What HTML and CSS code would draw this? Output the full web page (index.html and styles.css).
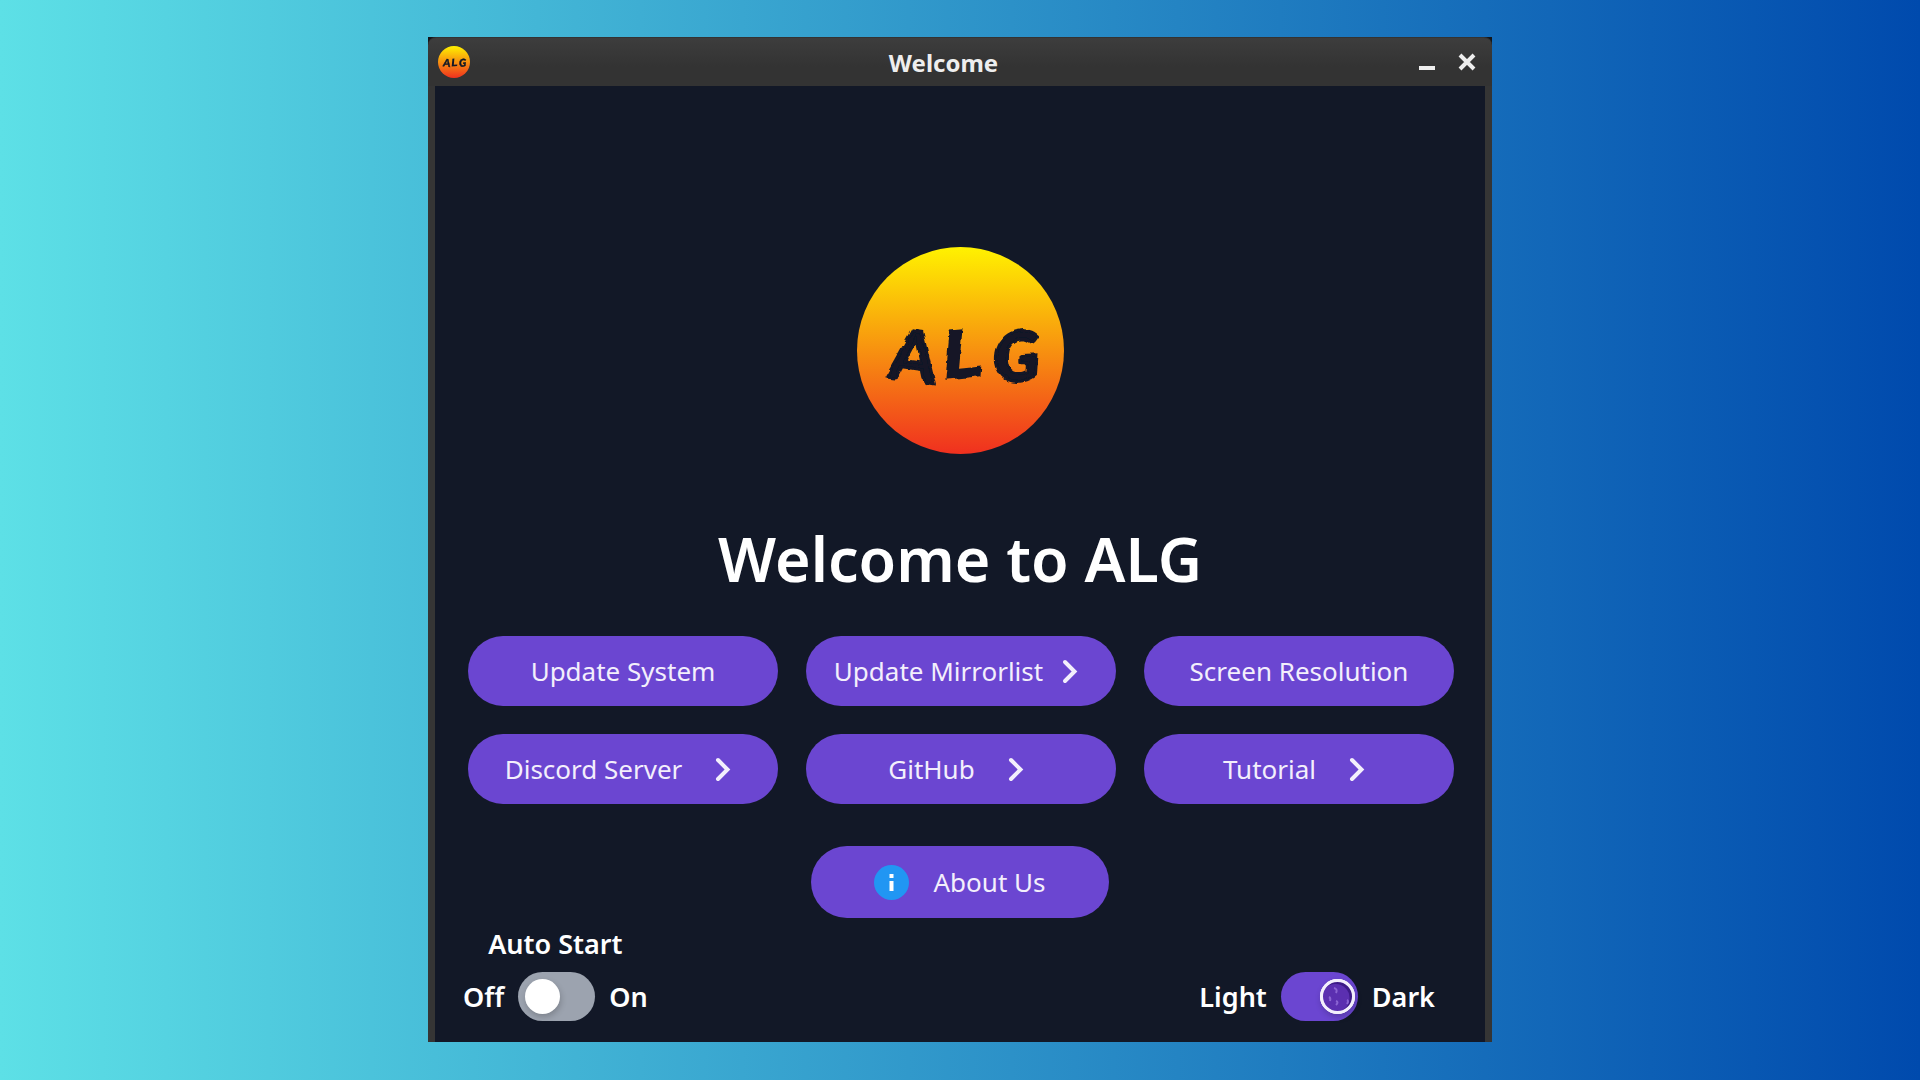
FILE: index.html
```html
<!DOCTYPE html>
<html lang="en">
<head>
<meta charset="utf-8">
<meta name="viewport" content="width=device-width, initial-scale=1">
<title>Welcome</title>
<link rel="stylesheet" href="styles.css">
</head>
<body>
<svg class="defs" aria-hidden="true">
  <defs>
    <linearGradient id="sun" x1="0" y1="0" x2="0" y2="1">
      <stop offset="0" stop-color="#fff200"/>
      <stop offset="1" stop-color="#f0301f"/>
    </linearGradient>
    <filter id="brush" x="-5%" y="-5%" width="110%" height="110%">
      <feTurbulence type="fractalNoise" baseFrequency="0.09" numOctaves="2" seed="4" result="noise"/>
      <feDisplacementMap in="SourceGraphic" in2="noise" scale="5" xChannelSelector="R" yChannelSelector="G"/>
    </filter>
    <symbol id="logo" viewBox="0 0 207 207">
      <circle cx="103.500" cy="103.500" r="103.500" fill="url(#sun)"/>
      <text class="logo-text" filter="url(#brush)"><tspan class="logo-a" x="30" y="130" rotate="8">A</tspan><tspan class="logo-l" x="87" y="133" rotate="-6">L</tspan><tspan x="138" y="135" rotate="-3">G</tspan></text>
    </symbol>
    <symbol id="chevron" viewBox="0 0 35 35">
      <path d="M12 8 21.500 17.500 12 27" fill="none" stroke="currentColor" stroke-width="4" stroke-linecap="round"/>
    </symbol>
  </defs>
</svg>
<main class="window">
  <header class="titlebar">
    <svg class="app-icon" aria-hidden="true"><use href="#logo"/></svg>
    <span class="title">Welcome</span>
    <div class="controls">
      <button class="control" type="button" aria-label="Minimize">
        <svg viewBox="0 0 20 20" aria-hidden="true"><path d="M2 16H18" stroke="#eee" stroke-width="4"/></svg>
      </button>
      <button class="control" type="button" aria-label="Close">
        <svg viewBox="0 0 20 20" aria-hidden="true"><path d="M3 3 17 17M17 3 3 17" stroke="#eee" stroke-width="4"/></svg>
      </button>
    </div>
  </header>
  <section class="content">
    <svg class="logo" role="img" aria-label="ALG logo"><use href="#logo"/></svg>
    <h1 class="heading">Welcome to ALG</h1>
    <div class="actions">
      <button class="action" type="button">Update System</button>
      <button class="action action-tight" type="button">Update Mirrorlist<svg class="icon" aria-hidden="true"><use href="#chevron"/></svg></button>
      <button class="action" type="button">Screen Resolution</button>
      <button class="action" type="button">Discord Server<svg class="icon" aria-hidden="true"><use href="#chevron"/></svg></button>
      <button class="action" type="button">GitHub<svg class="icon" aria-hidden="true"><use href="#chevron"/></svg></button>
      <button class="action" type="button">Tutorial<svg class="icon" aria-hidden="true"><use href="#chevron"/></svg></button>
    </div>
    <button class="action about" type="button">
      <svg class="icon" viewBox="0 0 35 35" aria-hidden="true">
        <circle cx="17.500" cy="17.500" r="17.500" fill="#2196f3"/>
        <path d="M15.500 9h4v4h-4zM15.500 16h4v10h-4z" fill="#fff"/>
      </svg>
      About Us
    </button>
    <footer class="settings">
      <div class="setting">
        <label class="setting-name" for="autostart">Auto Start</label>
        <div class="toggle">
          <span>Off</span>
          <input class="switch" type="checkbox" id="autostart">
          <span>On</span>
        </div>
      </div>
      <label class="toggle">
        <span>Light</span>
        <span class="switch-wrap">
          <input class="switch switch-theme" type="checkbox" checked aria-label="Dark theme">
          <svg class="moon" viewBox="0 0 35 35" aria-hidden="true">
            <circle cx="17.500" cy="17.500" r="16" fill="#3d1a87"/>
            <circle cx="15.500" cy="19" r="14" fill="#5b2fb0"/>
            <g fill="none" stroke="#8a63d2" stroke-width="2">
              <path d="M14 9q4 1 2 5M9 18q2 1 1 4M16 22q3 1 0 4M27 21q2 1 0 4"/>
            </g>
            <circle cx="17.500" cy="17.500" r="16" fill="none" stroke="#f3effc" stroke-width="3"/>
          </svg>
        </span>
        <span>Dark</span>
      </label>
    </footer>
  </section>
</main>
</body>
</html>
```
FILE: styles.css
```css
* {
  box-sizing: border-box;
}

body {
  margin: 0;
  min-height: 100vh;
  padding: 37px 20px;
  background: linear-gradient(90deg, #5de0e6, #004aad);
  color: #fff;
  font-family: "Noto Sans", "Open Sans", sans-serif;
}

button {
  border: 0;
  padding: 0;
  color: inherit;
  font: inherit;
  cursor: pointer;
}

.defs {
  position: absolute;
  width: 0;
  height: 0;
}

.window {
  max-width: 1064px;
  margin: 0 auto;
  background: #14161a;
}

.titlebar {
  display: flex;
  align-items: center;
  height: 49px;
  padding: 0 15px 0 10px;
  border-top: 1px solid #333;
  border-radius: 8px 8px 0 0;
  background: linear-gradient(#3d3d3d, #333 60%);
}

.app-icon {
  width: 32px;
  height: 32px;
}

.title {
  flex: 1;
  padding-top: 2px;
  color: #eee;
  font-size: 24px;
  font-weight: 700;
  line-height: 32px;
  text-align: center;
}

.controls {
  display: flex;
  justify-content: flex-end;
  gap: 20px;
}

.control {
  width: 20px;
  height: 20px;
  background: none;
}

.control svg {
  display: block;
}

.content {
  display: flex;
  flex-direction: column;
  align-items: center;
  padding: 161px 26px 21px;
  border: solid #353535;
  border-width: 0 7px;
  background: #121827;
}

.logo {
  width: 207px;
  height: 207px;
}

.logo-text {
  fill: #121827;
  stroke: #121827;
  stroke-width: 3px;
  font: italic 900 68px Lato, sans-serif;
}

.logo-a {
  font-size: 68px;
  font-style: normal;
  font-weight: 700;
}

.logo-l {
  font-family: "DejaVu Sans", sans-serif;
  font-size: 68px;
  font-weight: 700;
  stroke-width: 0;
}

.heading {
  margin: 65px 0 37px;
  font-size: 61px;
  font-weight: 600;
  line-height: 80px;
}

.actions {
  display: grid;
  grid-template-columns: repeat(3, 1fr);
  gap: 28px;
  width: 100%;
  padding: 0 5px 0 7px;
}

.action {
  display: flex;
  align-items: center;
  justify-content: center;
  gap: 24px;
  min-height: 70px;
  border-radius: 36px;
  background: #6b46d1;
  color: #f3effc;
  font-size: 26px;
  line-height: 36px;
}

.action-tight {
  gap: 10px;
}

.icon {
  flex: none;
  width: 35px;
  height: 35px;
}

.about {
  width: 298px;
  min-height: 72px;
  margin-top: 42px;
}

.settings {
  display: flex;
  align-items: flex-end;
  justify-content: space-between;
  width: 100%;
  padding: 8px 24px 0 2px;
  font-size: 27px;
  font-weight: 600;
  line-height: 36px;
}

.setting {
  display: flex;
  flex-direction: column;
  align-items: center;
  gap: 10px;
}

.toggle {
  display: flex;
  align-items: center;
  gap: 14px;
}

.switch {
  display: block;
  width: 77px;
  height: 49px;
  margin: 0;
  padding: 7px;
  appearance: none;
  border-radius: 25px;
  background: #9ca3af;
}

.switch::before {
  content: "";
  display: block;
  width: 35px;
  height: 35px;
  border-radius: 50%;
  background: #fff;
  box-shadow: 1px 3px 6px #0003;
}

.switch-wrap {
  position: relative;
}

.switch-theme {
  background: #6b46d1;
}

.switch-theme::before {
  margin-left: auto;
  margin-right: -4px;
}

.moon {
  position: absolute;
  top: 7px;
  right: 3px;
  width: 35px;
  height: 35px;
}
```
